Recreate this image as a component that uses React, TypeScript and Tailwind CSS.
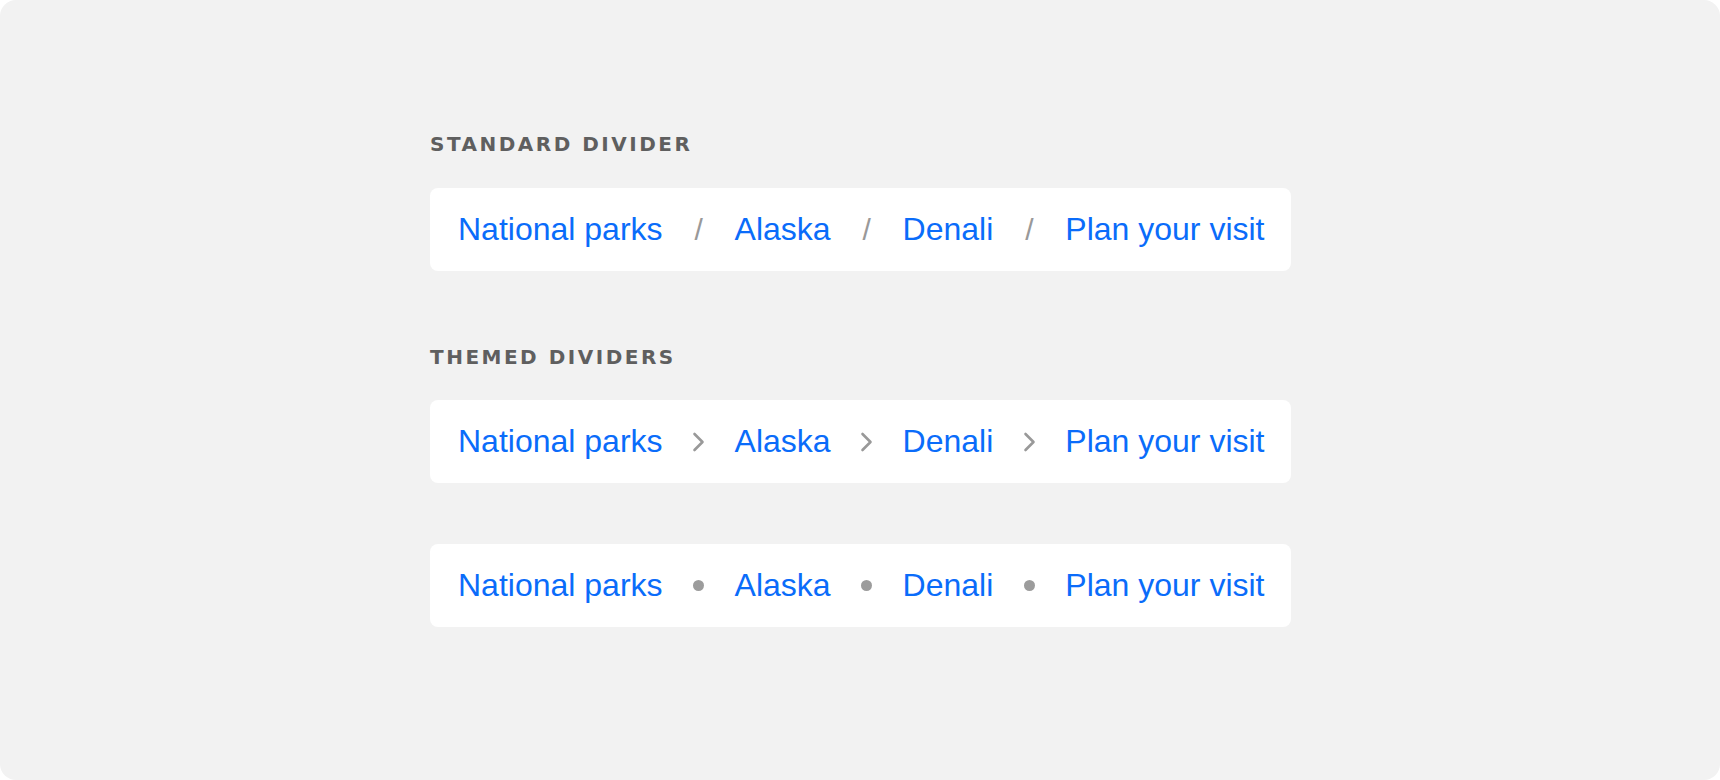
import type { ReactNode } from "react";

const crumbs = ["National parks", "Alaska", "Denali", "Plan your visit"];

type Divider = "slash" | "chevron" | "dot";

function Separator({ kind }: { kind: Divider }) {
  return (
    <span className="flex w-2 shrink-0 items-center justify-center text-[#999999]" aria-hidden="true">
      {kind === "slash" && <span className="text-[30px] leading-none">/</span>}
      {kind === "chevron" && (
        <svg width="13" height="20" viewBox="0 0 13 20" fill="none" className="shrink-0">
          <path
            d="M2.5 2 L10.5 10 L2.5 18"
            stroke="currentColor"
            strokeWidth="2.6"
            strokeLinecap="round"
            strokeLinejoin="round"
          />
        </svg>
      )}
      {kind === "dot" && <span className="block h-[11px] w-[11px] shrink-0 rounded-full bg-[#9c9c9c]" />}
    </span>
  );
}

function Fragmentish({ children }: { children: ReactNode }) {
  return <>{children}</>;
}

function Breadcrumb({ divider }: { divider: Divider }) {
  return (
    <nav className="flex h-[83px] w-fit items-center gap-8 rounded-lg bg-white pl-[28px] pr-[26px]">
      {crumbs.map((c, i) => (
        <Fragmentish key={c}>
          {i > 0 && <Separator kind={divider} />}
          <a href="#" className="text-[32px] leading-[37px] whitespace-nowrap text-[#0a6cfa]">
            {c}
          </a>
        </Fragmentish>
      ))}
    </nav>
  );
}

function Heading({ children }: { children: ReactNode }) {
  return (
    <h2 className="text-[20px] leading-5 font-bold uppercase tracking-[0.125em] text-[#5f5f5f] [font-family:'DejaVu_Sans',sans-serif]">
      {children}
    </h2>
  );
}

export default function App() {
  return (
    <div className="bg-white [font-family:'Liberation_Sans',Arial,sans-serif]">
      <div className="flex h-[780px] w-full flex-col items-center rounded-2xl bg-[#f2f2f2] pt-[134px]">
        <div className="flex w-[860px] flex-col">
          <Heading>Standard divider</Heading>
          <div className="mt-[34px]">
            <Breadcrumb divider="slash" />
          </div>
          <div className="mt-[76px]">
            <Heading>Themed dividers</Heading>
          </div>
          <div className="mt-[33px]">
            <Breadcrumb divider="chevron" />
          </div>
          <div className="mt-[61px]">
            <Breadcrumb divider="dot" />
          </div>
        </div>
      </div>
    </div>
  );
}
